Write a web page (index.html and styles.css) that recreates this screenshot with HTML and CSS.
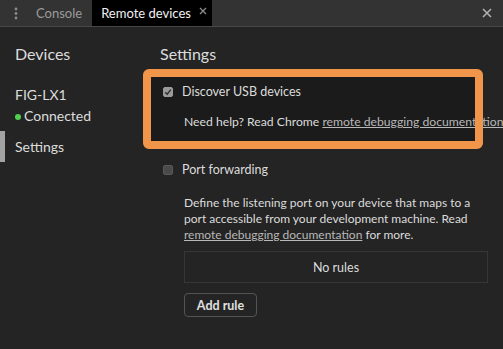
FILE: index.html
```html
<!DOCTYPE html>
<html lang="en">
<head>
    <meta charset="UTF-8">
    <meta name="viewport" content="width=device-width, initial-scale=1.0">
    <link rel="stylesheet" href="styles.css">
    <title>Remote devices</title>
</head>
<body>
    <div class="tabbar">
        <div class="menu">
            <svg width="4" height="13" viewBox="0 0 4 13">
                <circle cx="2" cy="2" r="1.4" fill="#8a8a8a"/>
                <circle cx="2" cy="6.5" r="1.4" fill="#8a8a8a"/>
                <circle cx="2" cy="11" r="1.4" fill="#8a8a8a"/>
            </svg>
        </div>
        <div class="tab">Console</div>
        <div class="tab active">
            <span>Remote devices</span>
            <svg class="tab-x" width="8" height="8" viewBox="0 0 8 8">
                <path d="M1 1 L7 7 M7 1 L1 7" stroke="#8c8c8c" stroke-width="1.3"/>
            </svg>
        </div>
        <div class="spacer"></div>
        <div class="close">
            <svg width="10" height="10" viewBox="0 0 10 10">
                <path d="M1 1 L9 9 M9 1 L1 9" stroke="#b0b0b0" stroke-width="1.6"/>
            </svg>
        </div>
    </div>
    <div class="panel">
        <div class="sidebar">
            <h2>Devices</h2>
            <div class="device">FIG-LX1</div>
            <div class="status"><span class="dot"></span>Connected</div>
            <div class="side-item selected">Settings</div>
        </div>
        <div class="main">
            <h2>Settings</h2>
            <div class="option first">
                <span class="box checked">
                    <svg width="8" height="8" viewBox="0 0 8 8">
                        <path d="M1.2 4.2 L3.2 6.2 L6.8 1.6" fill="none" stroke="#2e2e2e" stroke-width="1.4"/>
                    </svg>
                </span>
                Discover USB devices
            </div>
            <div class="help">Need help? Read Chrome <a href="#">remote debugging documentation</a></div>
            <div class="option second">
                <span class="box"></span>
                Port forwarding
            </div>
            <p class="desc">Define the listening port on your device that maps to a port accessible from your development machine. Read <a href="#">remote debugging documentation</a> for more.</p>
            <div class="rules">No rules</div>
            <button class="add">Add rule</button>
        </div>
        <div class="spot"></div>
        <div class="spot-frame"></div>
    </div>
</body>
</html>
```

FILE: styles.css
```css
*{
    margin: 0;
    padding: 0;
    box-sizing: border-box;
    font-family: Lato, "Noto Sans", sans-serif;
}
body{
    background: #242424;
    color: #dcdcdc;
    width: 503px;
    height: 349px;
    overflow: hidden;
}
.tabbar{
    height: 27px;
    display: flex;
    align-items: stretch;
    background: #333333;
    border-bottom: 1px solid #474747;
    white-space: nowrap;
}
.menu{
    width: 30px;
    flex-shrink: 0;
    display: flex;
    align-items: center;
    justify-content: center;
    padding-left: 2px;
}
.tab{
    flex-shrink: 0;
    display: flex;
    align-items: center;
    padding: 0 10px 0 6px;
    font-size: 13px;
    color: #9b9b9b;
}
.tab.active{
    background: #000;
    color: #f0f0f0;
    padding: 0 5px 0 9px;
}
.tab-x{
    margin-left: 8px;
    margin-bottom: 4px;
}
.spacer{
    flex: 1;
}
.close{
    width: 30px;
    flex-shrink: 0;
    display: flex;
    align-items: center;
    justify-content: center;
    margin-right: 1px;
}
.panel{
    position: relative;
    display: flex;
}
.sidebar{
    width: 145px;
    flex-shrink: 0;
    padding-top: 17px;
}
h2{
    font-size: 16px;
    font-weight: normal;
    line-height: 20px;
    color: #dcdcdc;
}
.sidebar h2{
    padding-left: 15px;
}
.device, .status{
    font-size: 14px;
    line-height: 18px;
    padding-left: 15px;
}
.device{
    margin-top: 22px;
}
.status{
    margin-top: 3px;
    display: flex;
    align-items: center;
}
.dot{
    width: 6px;
    height: 6px;
    border-radius: 50%;
    background: #4fd04f;
    margin: 2px 3px 0 0;
}
.side-item{
    margin-top: 6px;
    height: 31px;
    line-height: 31px;
    font-size: 14px;
    padding-left: 15px;
}
.side-item.selected{
    border-left: 5px solid #a3a3a3;
    padding-left: 10px;
}
.main{
    position: relative;
    z-index: 1;
    padding-top: 17px;
    padding-left: 15px;
    flex: 1;
    min-width: 0;
    white-space: nowrap;
}
.option{
    display: flex;
    align-items: center;
    font-size: 12.5px;
    line-height: 18px;
    padding-left: 3px;
}
.option.first{
    margin-top: 19px;
}
.option.second{
    margin-top: 31px;
}
.box{
    width: 10px;
    height: 10px;
    border-radius: 2px;
    background: #4a4a4a;
    border: 1px solid #5a5a5a;
    margin-right: 9px;
    display: flex;
    align-items: center;
    justify-content: center;
}
.box.checked{
    background: #9a9a9a;
    border-color: #9a9a9a;
}
.help{
    margin-top: 13px;
    padding-left: 24px;
    font-size: 12.2px;
    line-height: 16px;
}
a{
    color: #b8b8b8;
}
.desc{
    margin-top: 16px;
    padding-left: 24px;
    width: 330px;
    white-space: normal;
    font-size: 12px;
    line-height: 16px;
}
.rules{
    margin: 8px 0 0 24px;
    width: 304px;
    height: 32px;
    border: 1px solid #363636;
    display: flex;
    align-items: center;
    justify-content: center;
    font-size: 12.5px;
}
.add{
    margin: 10px 0 0 24px;
    width: 73px;
    height: 24px;
    background: #242424;
    border: 1px solid #545454;
    border-radius: 4px;
    color: #e0e0e0;
    font-size: 12.5px;
    font-weight: bold;
}
.spot{
    position: absolute;
    left: 151px;
    top: 50px;
    width: 324px;
    height: 64px;
    background: #1b1b1b;
}
.spot-frame{
    position: absolute;
    z-index: 2;
    left: 143px;
    top: 42px;
    width: 340px;
    height: 80px;
    border: 8px solid #f0954a;
    border-radius: 6px;
}
```
